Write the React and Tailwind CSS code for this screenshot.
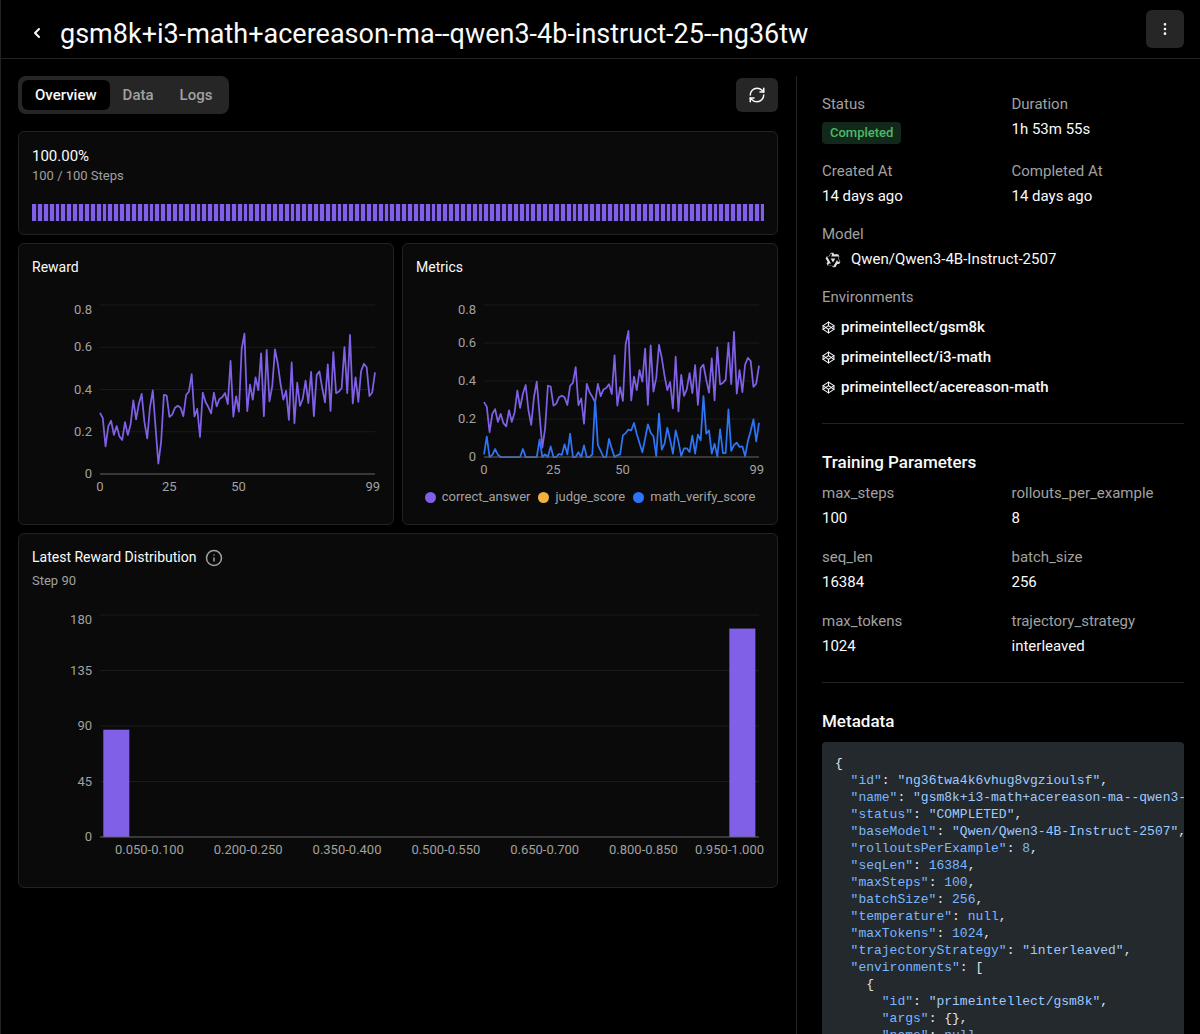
import React from "react";
import { ChevronLeft, Codepen, EllipsisVertical, Info, RefreshCw } from "lucide-react";

const REWARD = [
  0.289, 0.265, 0.131, 0.227, 0.252, 0.185, 0.227, 0.178, 0.161, 0.246,
  0.185, 0.233, 0.349, 0.259, 0.333, 0.379, 0.246, 0.169, 0.317, 0.396,
  0.222, 0.049, 0.151, 0.375, 0.371, 0.27, 0.281, 0.314, 0.323, 0.314,
  0.274, 0.374, 0.39, 0.473, 0.273, 0.308, 0.175, 0.385, 0.341, 0.317,
  0.287, 0.385, 0.32, 0.355, 0.363, 0.383, 0.331, 0.535, 0.271, 0.368,
  0.295, 0.593, 0.664, 0.298, 0.423, 0.352, 0.457, 0.397, 0.571, 0.274,
  0.587, 0.344, 0.415, 0.59, 0.522, 0.427, 0.352, 0.394, 0.256, 0.528,
  0.24, 0.432, 0.322, 0.356, 0.442, 0.336, 0.484, 0.274, 0.468, 0.486,
  0.407, 0.339, 0.519, 0.298, 0.577, 0.382, 0.39, 0.407, 0.601, 0.383,
  0.659, 0.334, 0.457, 0.341, 0.487, 0.522, 0.505, 0.369, 0.386, 0.481,
];

const VERIFY = [
  0.014, 0.107, 0, 0.011, 0.042, 0.012, 0, 0, 0, 0,
  0, 0, 0, 0, 0.042, 0, 0, 0, 0, 0,
  0.091, 0, 0.014, 0, 0.056, 0, 0, 0.016, 0.011, 0.067,
  0.014, 0.123, 0, 0, 0.025, 0, 0.061, 0, 0, 0.014,
  0.302, 0.063, 0.032, 0, 0, 0.096, 0.044, 0, 0.009, 0.014,
  0.114, 0.126, 0.144, 0.14, 0.179, 0.121, 0.072, 0.025, 0.096, 0.172,
  0.128, 0.109, 0.004, 0.228, 0.039, 0.07, 0.154, 0.091, 0.018, 0.14,
  0.081, 0.005, 0.046, 0.046, 0.026, 0.112, 0.018, 0.118, 0.088, 0.321,
  0.123, 0.14, 0.018, 0.07, 0.002, 0.146, 0.021, 0.021, 0.251, 0.032,
  0.063, 0.075, 0.053, 0.056, 0.004, 0.084, 0.137, 0.198, 0.082, 0.179,
];

const BINS = [87, 0, 0, 0, 0, 0, 0, 0, 0, 0, 0, 0, 0, 0, 0, 0, 0, 0, 0, 169];

const PURPLE = "#8060e6";
const BLUE = "#2e74f6";

function Card({ children }) {
  return (
    <section className="min-w-0 rounded-md border border-[#222222] bg-[#0a0a0a] p-[13px]">
      {children}
    </section>
  );
}

/* Axis frame: y labels beside the plot, x labels below it.
   xTicks holds [label, share of the width in front of it]. */
function Chart({ label, yTicks, xTicks, height, children }) {
  return (
    <div className="flex gap-2 pr-[5px] text-[13px] text-[#a1a1a1]">
      <div className={`flex w-[60px] shrink-0 flex-col justify-between ${height}`}>
        {yTicks.map((t, i) => (
          <div
            key={t}
            className={
              i === 0
                ? "flex h-0 items-start justify-end leading-[9px]"
                : "flex h-0 items-center justify-end leading-[18px]"
            }
          >
            {t}
          </div>
        ))}
      </div>
      <div className="min-w-0 flex-1">
        <svg
          role="img"
          aria-label={label}
          className={`block w-full overflow-visible ${height}`}
          viewBox="0 0 100 100"
          preserveAspectRatio="none"
        >
          {[0, 25, 50, 75].map((y) => (
            <line key={y} x1="0" x2="100" y1={y} y2={y} stroke="#1b1b1b" vectorEffect="non-scaling-stroke" />
          ))}
          {children}
          <line x1="0" x2="100" y1="100" y2="100" stroke="#666666" vectorEffect="non-scaling-stroke" />
        </svg>
        <div className="mt-1 -mr-[5px] flex h-[18px] leading-[18px] whitespace-nowrap">
          {xTicks.map(([t, share], i) => (
            <React.Fragment key={t}>
              <span style={{ flexGrow: share, flexBasis: 0 }} />
              <span className={i === xTicks.length - 1 ? "flex w-0 justify-end" : "flex w-0 justify-center"}>
                <span>{t}</span>
              </span>
            </React.Fragment>
          ))}
        </div>
      </div>
    </div>
  );
}

function Line({ data, color }) {
  const points = data.map((v, i) => `${(i / 99) * 100},${100 - (v / 0.8) * 100}`).join(" ");
  return (
    <polyline
      points={points}
      fill="none"
      stroke={color}
      strokeWidth="1.75"
      strokeLinejoin="round"
      vectorEffect="non-scaling-stroke"
    />
  );
}

const SCORE_TICKS = ["0.8", "0.6", "0.4", "0.2", "0"];
const STEP_TICKS = [["0", 0], ["25", 25], ["50", 25], ["99", 51]];
const BIN_TICKS = [
  ["0.050-0.100", 150],
  ["0.200-0.250", 300],
  ["0.350-0.400", 300],
  ["0.500-0.550", 300],
  ["0.650-0.700", 300],
  ["0.800-0.850", 300],
  ["0.950-1.000", 366],
];

const LEGEND = [
  ["correct_answer", "bg-[#8060e6]"],
  ["judge_score", "bg-[#f5b13d]"],
  ["math_verify_score", "bg-[#2e74f6]"],
];

function Field({ label, children }) {
  return (
    <div className="min-w-0 leading-[21px]">
      <dt className="text-[#a1a1a1]">{label}</dt>
      <dd className="mt-1">{children}</dd>
    </div>
  );
}

function QwenLogo() {
  return (
    <svg className="size-4 shrink-0" viewBox="0 0 24 24" fill="#e0e0e0" fillRule="evenodd" aria-hidden="true">
      <path d="M12.604 1.34c.393.69.784 1.382 1.174 2.075a.18.18 0 00.157.091h5.552c.174 0 .322.11.446.327l1.454 2.57c.19.337.24.478.024.837-.26.43-.513.864-.76 1.3l-.367.658c-.106.196-.223.28-.04.512l2.652 4.637c.172.301.111.494-.043.77-.437.785-.882 1.564-1.335 2.34-.159.272-.352.375-.68.37-.777-.016-1.552-.01-2.327.016a.099.099 0 00-.081.05 575.097 575.097 0 01-2.705 4.74c-.169.293-.38.363-.725.364-.997.003-2.002.004-3.017.002a.537.537 0 01-.465-.271l-1.335-2.323a.09.09 0 00-.083-.049H4.982c-.285.03-.553-.001-.805-.092l-1.603-2.77a.543.543 0 01-.002-.54l1.207-2.12a.198.198 0 000-.197 550.951 550.951 0 01-1.875-3.272l-.79-1.395c-.16-.31-.173-.496.095-.965.465-.813.927-1.625 1.387-2.436.132-.234.304-.334.584-.335a338.3 338.3 0 012.589-.001.124.124 0 00.107-.063l2.806-4.895a.488.488 0 01.422-.246c.524-.001 1.053 0 1.583-.006L11.704 1c.341-.003.724.032.9.34zm-3.432.403a.06.06 0 00-.052.03L6.254 6.788a.157.157 0 01-.135.078H3.253c-.056 0-.07.025-.041.074l5.81 10.156c.025.042.013.062-.034.063l-2.795.015a.218.218 0 00-.2.116l-1.32 2.31c-.044.078-.021.118.068.118l5.716.008c.046 0 .08.02.104.061l1.403 2.454c.046.081.092.082.139 0l5.006-8.76.783-1.382a.055.055 0 01.096 0l1.424 2.53a.122.122 0 00.107.062l2.763-.02a.04.04 0 00.035-.02.041.041 0 000-.04l-2.9-5.086a.108.108 0 010-.113l.293-.507 1.12-1.977c.024-.041.012-.062-.035-.062H9.2c-.059 0-.073-.026-.043-.077l1.434-2.505a.107.107 0 000-.114L9.225 1.774a.06.06 0 00-.053-.031zm6.29 8.02c.046 0 .058.02.034.06l-.832 1.465-2.613 4.585a.056.056 0 01-.05.029.058.058 0 01-.05-.029L8.498 9.841c-.02-.034-.01-.052.028-.054l.216-.012 6.722-.012z" />
    </svg>
  );
}

const METADATA = {
  id: "ng36twa4k6vhug8vgzioulsf",
  name: "gsm8k+i3-math+acereason-ma--qwen3-4b-instruct-25--ng36tw",
  status: "COMPLETED",
  baseModel: "Qwen/Qwen3-4B-Instruct-2507",
  rolloutsPerExample: 8,
  seqLen: 16384,
  maxSteps: 100,
  batchSize: 256,
  temperature: null,
  maxTokens: 1024,
  trajectoryStrategy: "interleaved",
  environments: [{ id: "primeintellect/gsm8k", args: {}, name: null }],
};

function JsonLine({ text }) {
  const m = text.match(/^(\s*)("[^"]*")(: )(.*?)(,?)$/);
  if (!m) return <>{text + "\n"}</>;
  const [, indent, key, colon, value, comma] = m;
  const tone = value.startsWith('"')
    ? "text-[#9ecbff]"
    : /^[[{]/.test(value)
      ? "text-[#e1e4e8]"
      : "text-[#79b8ff]";
  return (
    <>
      {indent}
      <span className="text-[#79b8ff]">{key}</span>
      {colon}
      <span className={tone}>{value}</span>
      {comma + "\n"}
    </>
  );
}

const ENVIRONMENTS = ["primeintellect/gsm8k", "primeintellect/i3-math", "primeintellect/acereason-math"];
const PARAMETERS = [
  ["max_steps", "100"],
  ["rollouts_per_example", "8"],
  ["seq_len", "16384"],
  ["batch_size", "256"],
  ["max_tokens", "1024"],
  ["trajectory_strategy", "interleaved"],
];

export default function App() {
  return (
    <div className="flex h-screen flex-col overflow-hidden border-l border-[#222222] bg-black font-['Roboto','Noto_Sans',sans-serif] text-[15px] text-[#fafafa]">
      <header className="flex h-[59px] shrink-0 items-center border-b border-[#222222] pr-4 pl-7">
        <button type="button" aria-label="Back" className="mt-2 mr-[15px] shrink-0">
          <ChevronLeft className="size-4" strokeWidth={3} />
        </button>
        <h1 className="mt-[10px] min-w-0 flex-1 truncate text-[27px] leading-8">
          gsm8k+i3-math+acereason-ma--qwen3-4b-instruct-25--ng36tw
        </h1>
        <button
          type="button"
          aria-label="More actions"
          className="flex size-[38px] shrink-0 items-center justify-center rounded-md bg-[#262626]"
        >
          <EllipsisVertical className="size-4" strokeWidth={2} />
        </button>
      </header>

      <div className="grid min-h-0 flex-1 grid-cols-[760fr_388fr] gap-[18px] pt-[17px] pr-4 pl-[17px]">
        <main className="flex min-w-0 flex-col gap-2">
          <div className="mb-[9px] flex items-center justify-between">
            <div role="tablist" className="flex h-[38px] rounded-lg bg-[#262626] p-1 font-medium text-[#a1a1a1]">
              <button type="button" role="tab" aria-selected="true" className="rounded-md bg-black px-[13px] text-[#fafafa]">
                Overview
              </button>
              <button type="button" role="tab" aria-selected="false" className="px-[13px]">
                Data
              </button>
              <button type="button" role="tab" aria-selected="false" className="px-[13px]">
                Logs
              </button>
            </div>
            <button
              type="button"
              aria-label="Refresh"
              className="flex h-[34px] w-[42px] items-center justify-center rounded-md bg-[#262626]"
            >
              <RefreshCw className="size-[18px]" strokeWidth={2} />
            </button>
          </div>

          <Card>
            <div className="leading-[22px]">100.00%</div>
            <div className="text-[13px] leading-[17px] text-[#a1a1a1]">100 / 100 Steps</div>
            <div
              role="progressbar"
              aria-label="Training progress"
              aria-valuenow={100}
              className="mt-5 flex h-[17px] gap-[2px] bg-[#1d1533]"
            >
              {Array.from({ length: 125 }, (_, i) => (
                <span key={i} className="flex-1 bg-[#8060e6]" />
              ))}
            </div>
          </Card>

          <div className="grid grid-cols-2 gap-2">
            <Card>
              <h2 className="mb-[27px] text-[14px] leading-[21px]">Reward</h2>
              <Chart label="Reward by step" yTicks={SCORE_TICKS} xTicks={STEP_TICKS} height="h-[169px]">
                <Line data={REWARD} color={PURPLE} />
              </Chart>
            </Card>
            <Card>
              <h2 className="mb-[27px] text-[14px] leading-[21px]">Metrics</h2>
              <Chart label="Metrics by step" yTicks={SCORE_TICKS} xTicks={STEP_TICKS} height="h-[152px]">
                <Line data={REWARD} color={PURPLE} />
                <Line data={VERIFY} color={BLUE} />
              </Chart>
              <ul className="mt-[9px] mb-[5px] flex justify-center gap-2 text-[13px] leading-[18px] text-[#a1a1a1]">
                {LEGEND.map(([name, swatch]) => (
                  <li key={name} className="flex items-center gap-[6px]">
                    <span className={`size-[11px] rounded-full ${swatch}`} />
                    {name}
                  </li>
                ))}
              </ul>
            </Card>
          </div>

          <Card>
            <div className="flex items-center gap-[9px]">
              <h2 className="text-[14px] leading-[21px]">Latest Reward Distribution</h2>
              <Info className="size-[18px] text-[#a1a1a1]" strokeWidth={2} />
            </div>
            <p className="mt-1 mb-[25px] text-[13px] leading-[18px] text-[#a1a1a1]">Step 90</p>
            <Chart
              label="Latest reward distribution"
              yTicks={["180", "135", "90", "45", "0"]}
              xTicks={BIN_TICKS}
              height="h-[222px]"
            >
              {BINS.map((n, i) => (
                <rect
                  key={i}
                  x={i * 5 + 0.5}
                  width="3.95"
                  y={100 - (n / 180) * 100}
                  height={(n / 180) * 100}
                  fill={PURPLE}
                />
              ))}
            </Chart>
            <div className="h-[15px]" />
          </Card>
        </main>

        <aside className="min-w-0 border-l border-[#222222] pt-[18px] pl-[25px]">
          <dl className="grid grid-cols-2 gap-[17px]">
            <div className="leading-[21px]">
              <dt className="text-[#a1a1a1]">Status</dt>
              <dd className="mt-[7px] flex">
                <span className="rounded-[4px] bg-[#12281a] px-2 text-[13px] leading-[22px] font-medium text-[#4fb866]">
                  Completed
                </span>
              </dd>
            </div>
            <Field label="Duration">1h 53m 55s</Field>
            <Field label="Created At">14 days ago</Field>
            <Field label="Completed At">14 days ago</Field>
            <div className="col-span-2">
              <Field label="Model">
                <span className="flex items-center gap-[10px] pl-[3px]">
                  <QwenLogo />
                  Qwen/Qwen3-4B-Instruct-2507
                </span>
              </Field>
            </div>
            <div className="col-span-2 leading-[21px]">
              <dt className="text-[#a1a1a1]">Environments</dt>
              {ENVIRONMENTS.map((env) => (
                <dd key={env} className="mt-[9px]">
                  <a href="#" className="flex items-center gap-[6px] font-medium">
                    <Codepen className="size-[13px]" strokeWidth={2} />
                    {env}
                  </a>
                </dd>
              ))}
            </div>
          </dl>

          <hr className="mt-[25px] mb-[27px] border-[#222222]" />

          <h2 className="mb-[10px] text-[17px] leading-[22px] font-medium">Training Parameters</h2>
          <dl className="grid grid-cols-2 gap-x-[17px] gap-y-[18px]">
            {PARAMETERS.map(([name, value]) => (
              <Field key={name} label={name}>
                {value}
              </Field>
            ))}
          </dl>

          <hr className="mt-[25px] mb-[27px] border-[#222222]" />

          <h2 className="mb-[10px] text-[17px] leading-[22px] font-medium">Metadata</h2>
          <pre className="overflow-hidden rounded-[4px] bg-[#24292e] p-[13px] font-['Liberation_Mono',monospace] text-[13px] leading-[17px] text-[#e1e4e8]">
            {JSON.stringify(METADATA, null, 2)
              .split("\n")
              .map((text, i) => (
                <JsonLine key={i} text={text} />
              ))}
          </pre>
        </aside>
      </div>
    </div>
  );
}
